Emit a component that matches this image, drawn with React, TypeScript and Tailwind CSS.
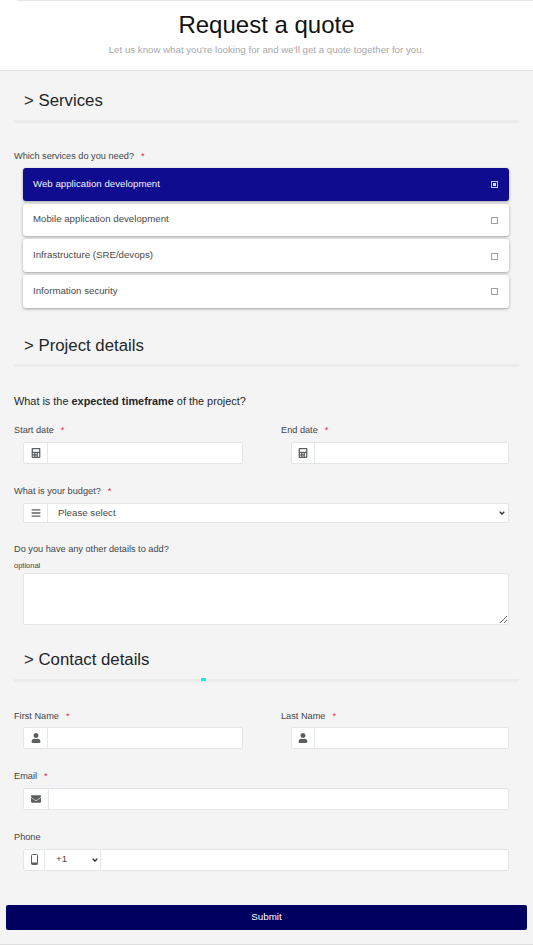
import { ReactNode } from 'react';
import { FaBars, FaCalculator, FaEnvelope, FaUser } from 'react-icons/fa';

const services = [
  { name: 'Web application development', selected: true },
  { name: 'Mobile application development', selected: false },
  { name: 'Infrastructure (SRE/devops)', selected: false },
  { name: 'Information security', selected: false },
];

const SectionTitle = ({ title, className = '' }: { title: string; className?: string }) => (
  <div className={className}>
    <h2 className="pl-[24px] text-[16.8px] leading-[22px] text-[#212529]">&gt; {title}</h2>
  </div>
);

const Divider = ({ className = '' }: { className?: string }) => (
  <div className={`mx-[14px] h-[3px] bg-[#ebebeb] ${className}`} />
);

const FieldLabel = ({ text, required }: { text: string; required?: boolean }) => (
  <div className="flex h-[12px] items-center text-[9.2px] leading-[12px] text-[#3f4448]">
    <span>{text}</span>
    {required && <span className="ml-[7px] text-[#e0264f]">*</span>}
  </div>
);

const Addon = ({ children, width }: { children: ReactNode; width: string }) => (
  <div className={`flex shrink-0 items-center justify-center border-r border-[#e4e8ec] text-[#5c5f62] ${width}`}>
    {children}
  </div>
);

const InputGroup = ({ icon, className = '', addonWidth = 'w-[24px]' }: { icon: ReactNode; className?: string; addonWidth?: string }) => (
  <div className={`flex h-[22px] rounded-[2px] border border-[#e2e6ea] bg-white ${className}`}>
    <Addon width={addonWidth}>{icon}</Addon>
    <input className="min-w-0 flex-1 bg-white outline-none" />
  </div>
);

const Calculator = () => <FaCalculator className="h-[10px] w-[10px]" />;
const Person = () => <FaUser className="h-[10px] w-[10px]" />;

const MobileIcon = () => (
  <svg viewBox="0 0 7 11" className="h-[11px] w-[7px]" fill="none">
    <rect x="0.5" y="0.5" width="6" height="10" rx="1" stroke="currentColor" />
    <rect x="0.5" y="8.5" width="6" height="2" fill="currentColor" />
  </svg>
);

const Chevron = ({ className }: { className: string }) => (
  <svg viewBox="0 0 6 4" className={`pointer-events-none absolute h-[4px] w-[6px] text-[#333333] ${className}`} fill="none">
    <path d="M0.7 0.7 L3 3 L5.3 0.7" stroke="currentColor" strokeWidth="1.4" />
  </svg>
);

const ServiceCard = ({ name, selected }: { name: string; selected: boolean }) => (
  <div
    className={`flex h-[32.7px] items-center justify-between rounded-[3px] pl-[10px] pr-[11px] text-[9.7px] shadow-[0_1px_3px_rgba(0,0,0,0.35)] ${
      selected ? 'bg-[#100c8f] text-[#f2f2ff]' : 'bg-white text-[#4a4a4a]'
    }`}
  >
    <span className="-mt-[1px]">{name}</span>
    <span
      className={`mt-[1px] flex h-[7px] w-[7px] items-center justify-center border ${
        selected ? 'border-[#c9c8ee]' : 'border-[#a0a0a0]'
      }`}
    >
      {selected && <span className="h-[3px] w-[3px] bg-[#dddcf5]" />}
    </span>
  </div>
);

export default function App() {
  return (
    <div className="min-h-[945px] bg-[#f4f4f4] font-['Liberation_Sans',Arial,sans-serif]">
      <header className="h-[71px] border-b border-[#e4e4e4] bg-white text-center">
        <div className="ml-[17px] h-px bg-[#e8e8e8]" />
        <h1 className="mt-[9px] text-[24px] leading-[29px] text-[#111111]">Request a quote</h1>
        <p className="mt-[4px] text-[9.7px] leading-[14px] text-[#a8a8a8]">
          Let us know what you're looking for and we'll get a quote together for you.
        </p>
      </header>

      <SectionTitle title="Services" className="pt-[19px]" />
      <Divider className="mt-[8px]" />

      <div className="mt-[27px] px-[14px]">
        <FieldLabel text="Which services do you need?" required />
      </div>
      <div className="mt-[6px] flex flex-col gap-[3px] pl-[23px] pr-[24px]">
        {services.map(s => (
          <ServiceCard key={s.name} name={s.name} selected={s.selected} />
        ))}
      </div>

      <SectionTitle title="Project details" className="pt-[27px]" />
      <Divider className="mt-[7px]" />

      <p className="mt-[27px] px-[14px] text-[10.9px] leading-[14px] text-[#23272b]">
        What is the <b>expected timeframe</b> of the project?
      </p>

      <div className="mt-[16px] grid grid-cols-[267px_1fr] px-[14px]">
        <div>
          <FieldLabel text="Start date" required />
          <InputGroup icon={<Calculator />} className="ml-[9px] mt-[6px] w-[220px]" />
        </div>
        <div>
          <FieldLabel text="End date" required />
          <InputGroup icon={<Calculator />} addonWidth="w-[23px]" className="ml-[10px] mt-[6px] w-[218px]" />
        </div>
      </div>

      <div className="mt-[21px] px-[14px]">
        <FieldLabel text="What is your budget?" required />
        <div className="relative ml-[9px] mr-[10px] mt-[6px] flex h-[20px] rounded-[2px] border border-[#e2e6ea] bg-white">
          <Addon width="w-[24px]">
            <FaBars className="h-[10px] w-[10px]" />
          </Addon>
          <select className="min-w-0 flex-1 appearance-none bg-white pl-[10px] pt-[1px] text-[9.7px] text-[#4a4a4a] outline-none">
            <option>Please select</option>
          </select>
          <Chevron className="right-[3px] top-[7px]" />
        </div>
      </div>

      <div className="mt-[20px] px-[14px]">
        <FieldLabel text="Do you have any other details to add?" />
        <div className="mt-[6px] text-[7.5px] leading-[10px] text-[#3f4448]">optional</div>
        <textarea className="ml-[9px] mt-[2px] block h-[52px] w-[486px] rounded-[2px] border border-[#e2e6ea] bg-white outline-none" />
      </div>

      <SectionTitle title="Contact details" className="pt-[24px]" />
      <div className="relative">
        <Divider className="mt-[8px]" />
        <div className="absolute left-[201px] top-[-1px] h-[3px] w-[5px] bg-[#1ee8e8]" />
      </div>

      <div className="mt-[28px] grid grid-cols-[267px_1fr] px-[14px]">
        <div>
          <FieldLabel text="First Name" required />
          <InputGroup icon={<Person />} className="ml-[9px] mt-[5px] w-[220px]" />
        </div>
        <div>
          <FieldLabel text="Last Name" required />
          <InputGroup icon={<Person />} addonWidth="w-[23px]" className="ml-[10px] mt-[5px] w-[218px]" />
        </div>
      </div>

      <div className="mt-[21px] px-[14px]">
        <FieldLabel text="Email" required />
        <InputGroup
          icon={<FaEnvelope className="h-[10px] w-[10px]" />}
          addonWidth="w-[25px]"
          className="ml-[9px] mr-[10px] mt-[6px]"
        />
      </div>

      <div className="mt-[21px] px-[14px]">
        <FieldLabel text="Phone" />
        <div className="ml-[9px] mr-[10px] mt-[6px] flex h-[22px] rounded-[2px] border border-[#e2e6ea] bg-white">
          <Addon width="w-[21px]">
            <MobileIcon />
          </Addon>
          <div className="relative w-[56px] shrink-0 border-r border-[#e4e8ec]">
            <select className="block h-[20px] w-full appearance-none bg-white pl-[11px] text-[9.7px] text-[#4a4a4a] outline-none">
              <option>+1</option>
            </select>
            <Chevron className="right-[2px] top-[8px]" />
          </div>
          <input className="min-w-0 flex-1 bg-white outline-none" />
        </div>
      </div>

      <div className="mt-[34px] px-[6px]">
        <button className="block h-[25px] w-full rounded-[2px] bg-[#000060] text-[9.8px] text-white">Submit</button>
      </div>

      <div className="mt-[14px] h-px bg-[#dddddd]" />
    </div>
  );
}
